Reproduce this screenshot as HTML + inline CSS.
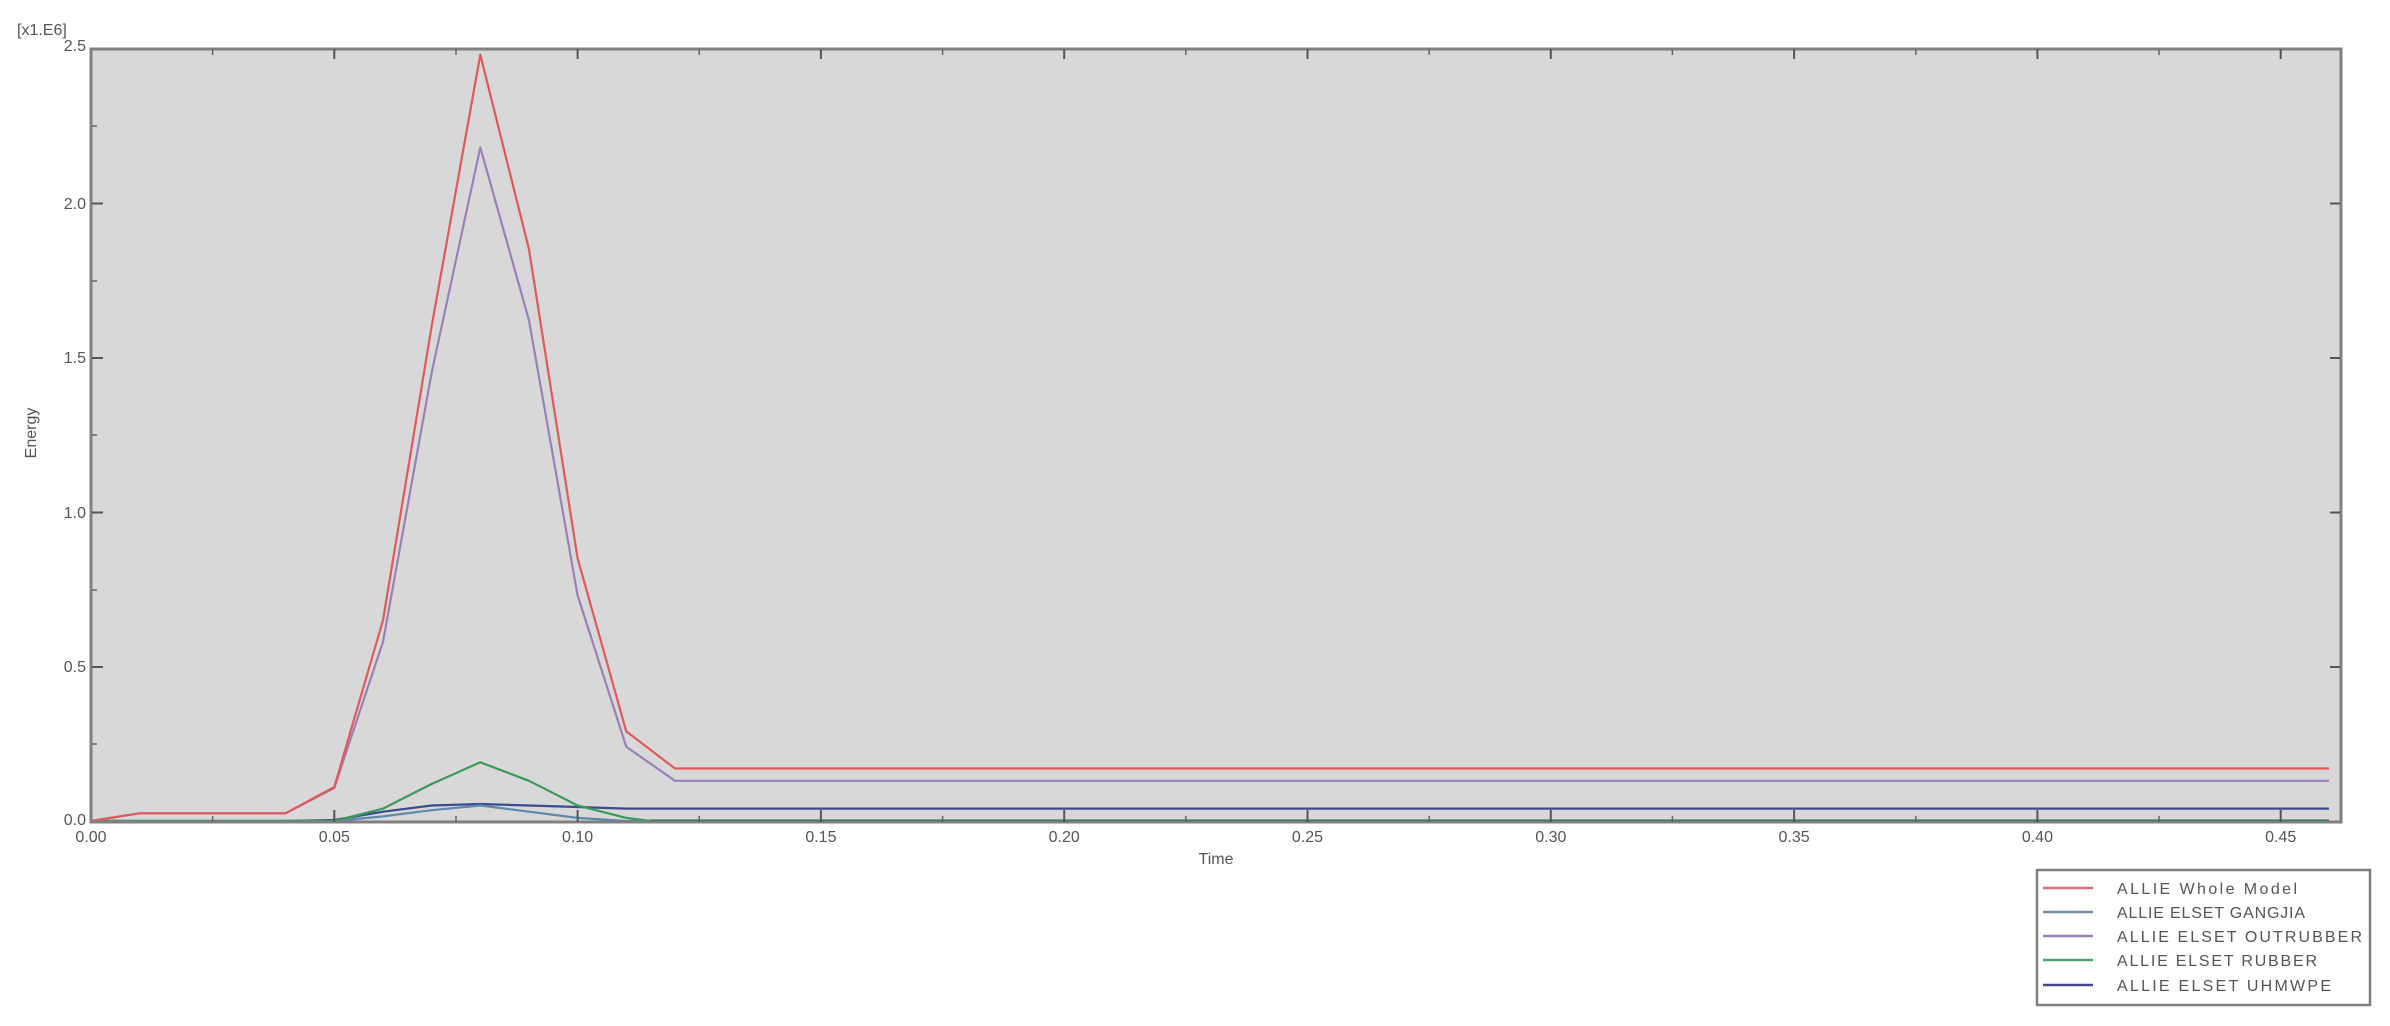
<!DOCTYPE html>
<html><head><meta charset="utf-8">
<style>
html,body{margin:0;padding:0;background:#fff;}
svg{display:block;}
text{font-family:"Liberation Sans",sans-serif;fill:#555;}
</style></head>
<body>
<svg width="2390" height="1026" viewBox="0 0 2390 1026" xmlns="http://www.w3.org/2000/svg">
<rect width="2390" height="1026" fill="#fff"/>
<!-- plot area -->
<rect x="91" y="49" width="2250" height="773" fill="#d8d8d8"/>
<!-- curves -->
<g fill="none" stroke-width="2.2" stroke-linejoin="round">
<polyline stroke="#3c4a8e" points="91,821 285.6,821 334.3,820 383,811.7 431.6,805.5 480.3,804 529,805.5 577.6,807 626.3,808.6 2329,808.6"/>
<polyline stroke="#5d8aa8" points="91,821 334.3,821 383,816.4 431.6,810.2 480.3,805.5 529,811.7 577.6,817.9 626.3,821 2329,821"/>
<polyline stroke="#3a9a5a" points="91,821 334.3,821 383,808.6 431.6,784 480.3,762.3 529,780.8 577.6,805.5 626.3,817.9 650.6,821 2329,821"/>
<polyline stroke="#1e6a40" points="650,821 2329,821" stroke-width="3"/>
<polyline stroke="#9a80b8" points="91,821 139.7,813.3 285.6,813.3 334.3,788 383,641.8 431.6,373 480.3,147.4 529,320.4 577.6,595.4 626.3,746.8 675,780.8 2329,780.8"/>
<polyline stroke="#e05a5a" points="91,821 139.7,813.3 285.6,813.3 334.3,787 383,620.2 431.6,326.6 480.3,54.7 529,249.3 577.6,558.3 626.3,731.4 675,768.5 2329,768.5"/>
</g>
<!-- frame -->
<rect x="91" y="49" width="2250" height="773" fill="none" stroke="#808080" stroke-width="3"/>
<!-- x ticks -->
<g stroke="#555" stroke-width="2">
<line x1="334.3" y1="822" x2="334.3" y2="810"/><line x1="577.6" y1="822" x2="577.6" y2="810"/>
<line x1="820.9" y1="822" x2="820.9" y2="810"/><line x1="1064.2" y1="822" x2="1064.2" y2="810"/>
<line x1="1307.5" y1="822" x2="1307.5" y2="810"/><line x1="1550.8" y1="822" x2="1550.8" y2="810"/>
<line x1="1794.1" y1="822" x2="1794.1" y2="810"/><line x1="2037.4" y1="822" x2="2037.4" y2="810"/>
<line x1="2280.7" y1="822" x2="2280.7" y2="810"/>
<line x1="334.3" y1="49" x2="334.3" y2="59"/><line x1="577.6" y1="49" x2="577.6" y2="59"/>
<line x1="820.9" y1="49" x2="820.9" y2="59"/><line x1="1064.2" y1="49" x2="1064.2" y2="59"/>
<line x1="1307.5" y1="49" x2="1307.5" y2="59"/><line x1="1550.8" y1="49" x2="1550.8" y2="59"/>
<line x1="1794.1" y1="49" x2="1794.1" y2="59"/><line x1="2037.4" y1="49" x2="2037.4" y2="59"/>
<line x1="2280.7" y1="49" x2="2280.7" y2="59"/>
<line x1="92" y1="203.5" x2="103" y2="203.5"/><line x1="92" y1="358" x2="103" y2="358"/>
<line x1="92" y1="512.5" x2="103" y2="512.5"/><line x1="92" y1="667" x2="103" y2="667"/>
<line x1="2340" y1="203.5" x2="2330" y2="203.5"/><line x1="2340" y1="358" x2="2330" y2="358"/>
<line x1="2340" y1="512.5" x2="2330" y2="512.5"/><line x1="2340" y1="667" x2="2330" y2="667"/>
</g>
<g stroke="#666" stroke-width="1.5">
<line x1="212.6" y1="822" x2="212.6" y2="816"/><line x1="456" y1="822" x2="456" y2="816"/>
<line x1="699.2" y1="822" x2="699.2" y2="816"/><line x1="942.6" y1="822" x2="942.6" y2="816"/>
<line x1="1185.8" y1="822" x2="1185.8" y2="816"/><line x1="1429.2" y1="822" x2="1429.2" y2="816"/>
<line x1="1672.4" y1="822" x2="1672.4" y2="816"/><line x1="1915.8" y1="822" x2="1915.8" y2="816"/>
<line x1="2159" y1="822" x2="2159" y2="816"/>
<line x1="212.6" y1="49" x2="212.6" y2="55"/><line x1="456" y1="49" x2="456" y2="55"/>
<line x1="699.2" y1="49" x2="699.2" y2="55"/><line x1="942.6" y1="49" x2="942.6" y2="55"/>
<line x1="1185.8" y1="49" x2="1185.8" y2="55"/><line x1="1429.2" y1="49" x2="1429.2" y2="55"/>
<line x1="1672.4" y1="49" x2="1672.4" y2="55"/><line x1="1915.8" y1="49" x2="1915.8" y2="55"/>
<line x1="2159" y1="49" x2="2159" y2="55"/>
<line x1="92" y1="126" x2="97" y2="126"/><line x1="92" y1="281" x2="97" y2="281"/>
<line x1="92" y1="435" x2="97" y2="435"/><line x1="92" y1="590" x2="97" y2="590"/>
<line x1="92" y1="744" x2="97" y2="744"/>
</g>
<!-- y labels -->
<g font-size="16" text-anchor="end">
<text x="86" y="51">2.5</text>
<text x="86" y="209">2.0</text>
<text x="86" y="363">1.5</text>
<text x="86" y="518">1.0</text>
<text x="86" y="672">0.5</text>
<text x="86" y="825">0.0</text>
</g>
<text x="17" y="35" font-size="16">[x1.E6]</text>
<text transform="translate(36,433) rotate(-90)" font-size="16" text-anchor="middle">Energy</text>
<!-- x labels -->
<g font-size="16" text-anchor="middle">
<text x="91" y="842">0.00</text><text x="334.3" y="842">0.05</text>
<text x="577.6" y="842">0.10</text><text x="820.9" y="842">0.15</text>
<text x="1064.2" y="842">0.20</text><text x="1307.5" y="842">0.25</text>
<text x="1550.8" y="842">0.30</text><text x="1794.1" y="842">0.35</text>
<text x="2037.4" y="842">0.40</text><text x="2280.7" y="842">0.45</text>
</g>
<text x="1216" y="864" font-size="16" text-anchor="middle">Time</text>
<!-- legend -->
<rect x="2037" y="870" width="333" height="135" fill="#fff" stroke="#808080" stroke-width="2.5"/>
<g stroke-width="2.5">
<line x1="2043" y1="888" x2="2093" y2="888" stroke="#e07070"/>
<line x1="2043" y1="912" x2="2093" y2="912" stroke="#7090a8"/>
<line x1="2043" y1="936" x2="2093" y2="936" stroke="#9a80b8"/>
<line x1="2043" y1="960" x2="2093" y2="960" stroke="#50a070"/>
<line x1="2043" y1="985" x2="2093" y2="985" stroke="#404a8a"/>
</g>
<g font-size="16">
<text x="2117" y="894" textLength="180">ALLIE Whole Model</text>
<text x="2117" y="918" textLength="188">ALLIE ELSET GANGJIA</text>
<text x="2117" y="942" textLength="245">ALLIE ELSET OUTRUBBER</text>
<text x="2117" y="966" textLength="200">ALLIE ELSET RUBBER</text>
<text x="2117" y="991" textLength="214">ALLIE ELSET UHMWPE</text>
</g>
</svg>
</body></html>
